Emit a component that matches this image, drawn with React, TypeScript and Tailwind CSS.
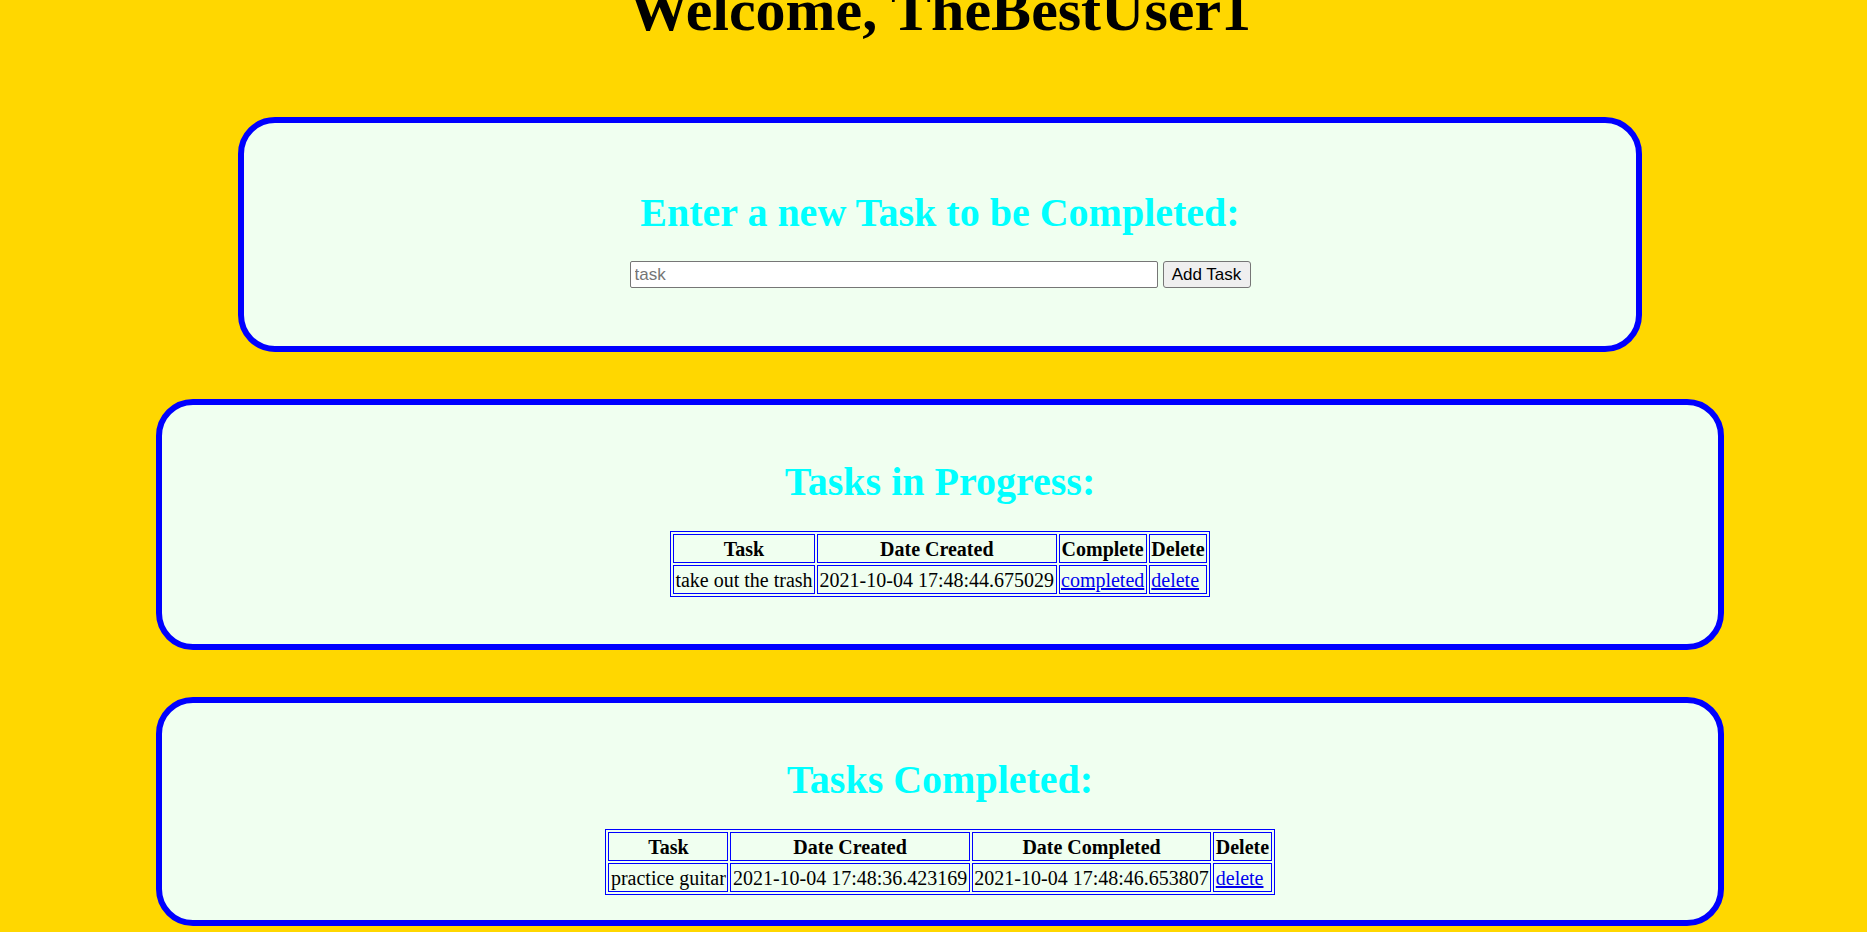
import React from 'react'

const serif = "font-['Liberation_Serif','Times_New_Roman',serif]"

function Panel({ className, children }: { className: string; children: React.ReactNode }) {
  return (
    <div className={`border-[6px] border-[#0000FF] rounded-[37px] bg-[#F0FFF0] ${className}`}>
      {children}
    </div>
  )
}

function Heading({ children }: { children: React.ReactNode }) {
  return (
    <h2 className="text-center text-[40px] leading-[46px] font-bold text-[#00FFFF]">
      {children}
    </h2>
  )
}

function Th({ children }: { children: React.ReactNode }) {
  return <th className="border border-[#0000FF] p-[1.5px] font-bold text-center">{children}</th>
}

function Td({ children }: { children: React.ReactNode }) {
  return <td className="border border-[#0000FF] p-[1.5px] text-left whitespace-nowrap">{children}</td>
}

function A({ children }: { children: React.ReactNode }) {
  return (
    <a href="#" className="text-[#0000EE] underline">
      {children}
    </a>
  )
}

const tableClass =
  'mx-auto border border-[#0000FF] border-separate border-spacing-[2.5px] text-[20px] leading-[24px] text-black'

export default function App() {
  return (
    <div className={`min-h-screen bg-[#FFD700] pl-[13px] pb-[40px] overflow-hidden ${serif}`}>
      <h1 className="-mt-[24px] text-center text-[60px] leading-[69px] font-bold text-black">
        Welcome, TheBestUser1
      </h1>

      {/* new task form */}
      <Panel className="mt-[72px] mx-[225px] h-[235px] pt-[67px]">
        <Heading>Enter a new Task to be Completed:</Heading>
        <form className="mt-[25px] flex justify-center items-center gap-[5px] font-['Liberation_Sans',Arial,sans-serif]">
          <input
            type="text"
            placeholder="task"
            className="w-[528px] h-[27px] bg-white border border-[#767676] rounded-[2px] px-[4px] text-[17px] text-black placeholder:text-[#757575] outline-none"
          />
          <button
            type="button"
            className="w-[88px] h-[27px] bg-[#EFEFEF] border border-[#767676] rounded-[3px] text-[17px] text-black leading-none"
          >
            Add Task
          </button>
        </form>
      </Panel>

      {/* in progress */}
      <Panel className="mt-[47px] mx-[143px] h-[251px] pt-[54px]">
        <Heading>Tasks in Progress:</Heading>
        <div className="mt-[26px]">
          <table className={tableClass}>
            <thead>
              <tr>
                <Th>Task</Th>
                <Th>Date Created</Th>
                <Th>Complete</Th>
                <Th>Delete</Th>
              </tr>
            </thead>
            <tbody>
              <tr>
                <Td>take out the trash</Td>
                <Td>2021-10-04 17:48:44.675029</Td>
                <Td>
                  <A>completed</A>
                </Td>
                <Td>
                  <A>delete</A>
                </Td>
              </tr>
            </tbody>
          </table>
        </div>
      </Panel>

      {/* completed */}
      <Panel className="mt-[47px] mx-[143px] h-[229px] pt-[54px]">
        <Heading>Tasks Completed:</Heading>
        <div className="mt-[26px]">
          <table className={tableClass}>
            <thead>
              <tr>
                <Th>Task</Th>
                <Th>Date Created</Th>
                <Th>Date Completed</Th>
                <Th>Delete</Th>
              </tr>
            </thead>
            <tbody>
              <tr>
                <Td>practice guitar</Td>
                <Td>2021-10-04 17:48:36.423169</Td>
                <Td>2021-10-04 17:48:46.653807</Td>
                <Td>
                  <A>delete</A>
                </Td>
              </tr>
            </tbody>
          </table>
        </div>
      </Panel>
    </div>
  )
}
